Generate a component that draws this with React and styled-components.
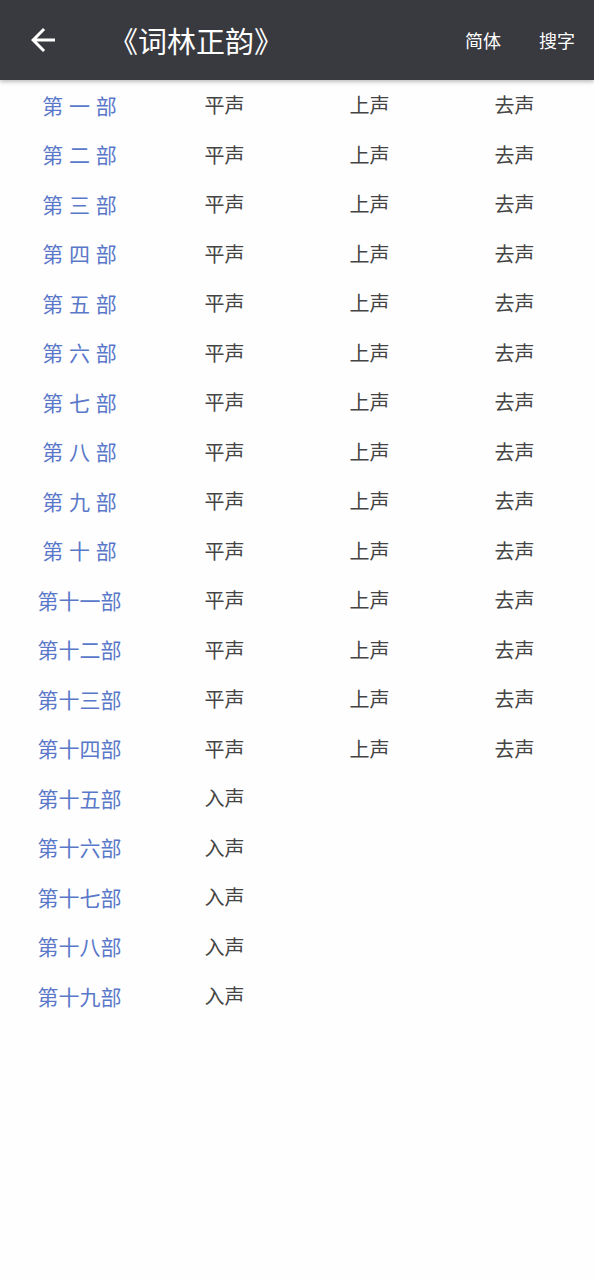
import React from 'react'
import styled, { createGlobalStyle } from 'styled-components'

const nums = ['一', '二', '三', '四', '五', '六', '七', '八', '九', '十',
  '十一', '十二', '十三', '十四', '十五', '十六', '十七', '十八', '十九']

const rows = nums.map((n, i) => ({
  name: n.length === 1 ? `第 ${n} 部` : `第${n}部`,
  tones: i < 14 ? ['平声', '上声', '去声'] : ['入声'],
}))

const App = () => {
  return (
    <Page>
      <GlobalStyle />
      <Header>
        <BackButton>
          <svg width="36" height="36" viewBox="0 0 24 24">
            <path d="M20 11H7.83l5.59-5.59L12 4l-8 8 8 8 1.41-1.41L7.83 13H20v-2z" fill="#fff" />
          </svg>
        </BackButton>
        <Title>《词林正韵》</Title>
        <Actions>
          <Action>简体</Action>
          <Action>搜字</Action>
        </Actions>
      </Header>
      <List>
        {rows.map((r) => (
          <Row key={r.name}>
            <PartName>{r.name}</PartName>
            {r.tones.map((t) => (
              <Tone key={t}>{t}</Tone>
            ))}
          </Row>
        ))}
      </List>
    </Page>
  )
}

const GlobalStyle = createGlobalStyle`
  body {
    margin: 0;
    background: #fefefe;
    font-family: "Noto Sans CJK SC", "Noto Sans", sans-serif;
  }
`

const Page = styled.div`
  min-height: 1280px;
  background: #fefefe;
`

const Header = styled.div`
  height: 80px;
  background: #393a3f;
  display: flex;
  align-items: center;
  box-shadow: 0 2px 4px rgba(0, 0, 0, 0.25);
  color: #fff;
`

const BackButton = styled.div`
  width: 36px;
  height: 36px;
  margin-left: 25px;
  display: flex;
`

const Title = styled.div`
  margin-left: 48px;
  font-size: 29px;
  line-height: 1;
`

const Actions = styled.div`
  margin-left: auto;
  display: flex;
  gap: 38px;
  margin-right: 19px;
`

const Action = styled.div`
  font-size: 18px;
`

const List = styled.div`
  padding: 0 7px;
`

const Row = styled.div`
  display: grid;
  grid-template-columns: repeat(4, 145px);
  height: 49.5px;
  align-items: center;
`

const PartName = styled.div`
  text-align: center;
  font-size: 21px;
  word-spacing: 1px;
  color: #5a78c9;
`

const Tone = styled.div`
  text-align: center;
  font-size: 20px;
  color: #444;
`

export default App
